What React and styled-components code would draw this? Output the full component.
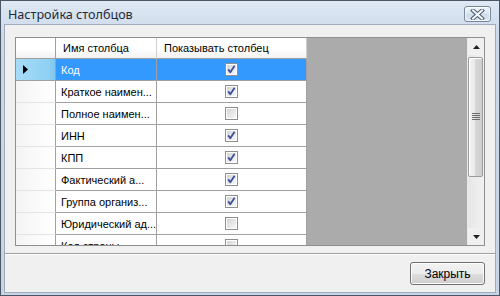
import React from "react";
import styled, { createGlobalStyle } from "styled-components";

const GlobalStyle = createGlobalStyle`
  html, body { margin: 0; padding: 0; }
  body { width: 500px; height: 296px; overflow: hidden; background: #fff; }
  * { box-sizing: border-box; }
`;

const Window = styled.div`
  width: 500px;
  height: 296px;
  border: 1px solid #4a5666;
  background: linear-gradient(#dfe8f4, #c9d7e9 40px, #c6d4e6);
  display: flex;
  flex-direction: column;
  font-family: "Liberation Sans", Arial, sans-serif;
`;

const TitleBar = styled.div`
  height: 23px;
  flex: none;
  display: flex;
  justify-content: space-between;
  align-items: flex-start;
  padding: 0 8px 0 7px;
`;

const Title = styled.div`
  margin-top: 6px;
  font-family: "Noto Sans", "Open Sans", sans-serif;
  font-size: 12.6px;
  line-height: 16px;
  color: #1e2a3a;
`;

const CloseButton = styled.div`
  margin-top: 5px;
  width: 27px;
  height: 16px;
  border: 1px solid #75869c;
  border-radius: 3px;
  background: linear-gradient(#f1f5fa, #dbe4ef 50%, #cfdbe8 51%, #dde6f1);
  box-shadow: inset 0 0 0 1px rgba(255, 255, 255, 0.7);
  display: flex;
  align-items: center;
  justify-content: center;
`;

const Client = styled.div`
  flex: 1;
  margin: 0 3px 2px 3px;
  border: 1px solid #9eabbc;
  background: #f0f0f0;
  display: flex;
  flex-direction: column;
`;

const Main = styled.div`
  padding: 12px 10px 7px 10px;
`;

const GridFrame = styled.div`
  height: 209px;
  border: 1px solid #8f8f8f;
  display: flex;
  overflow: hidden;
  background: #ababab;
`;

const Table = styled.div`
  display: grid;
  grid-template-columns: 40px 101px 150px;
  grid-template-rows: 21px;
  grid-auto-rows: 22px;
  align-content: start;
  background: #ababab;
`;

const HeaderCell = styled.div`
  border-right: 1px solid ${(p) => (p.$corner ? "#a0a0a0" : "#cfcfcf")};
  border-bottom: 1px solid #a0a0a0;
  background: linear-gradient(#ffffff, #ffffff 55%, #f2f2f2);
  font-size: 11px;
  color: #000;
  display: flex;
  align-items: center;
  padding-left: 7px;
  white-space: nowrap;
  overflow: hidden;
`;

const RowHead = styled.div`
  border-right: 1px solid #a0a0a0;
  border-bottom: 1px solid ${(p) => (p.$selected ? "#a0a0a0" : "#e4e4e4")};
  background: ${(p) =>
    p.$selected
      ? "linear-gradient(to right, #a6dcf7, #8fd0f3 85%, #7fc6ee)"
      : "linear-gradient(to right, #f4f4f4, #fbfbfb 60%, #ffffff)"};
  display: flex;
  align-items: center;
  padding-left: 7px;
`;

const Cell = styled.div`
  border-right: 1px solid #a0a0a0;
  border-bottom: 1px solid #a0a0a0;
  background: ${(p) => (p.$selected ? "#3399ff" : "#ffffff")};
  color: ${(p) => (p.$selected ? "#ffffff" : "#000000")};
  font-size: 11px;
  display: flex;
  align-items: center;
  justify-content: ${(p) => (p.$center ? "center" : "flex-start")};
  padding-left: ${(p) => (p.$center ? "0" : "5px")};
  white-space: nowrap;
  overflow: hidden;
`;

const Fill = styled.div`
  flex: 1;
  background: #ababab;
`;

const ScrollBar = styled.div`
  width: 17px;
  flex: none;
  background: linear-gradient(to right, #e6e6e6, #f2f2f2);
  border-left: 1px solid #e9e9e9;
  display: flex;
  flex-direction: column;
`;

const ArrowButton = styled.div`
  height: 17px;
  flex: none;
  display: flex;
  align-items: center;
  justify-content: center;
  background: #f0f0f0;
`;

const Track = styled.div`
  flex: 1;
  padding: 2px 0 0 0;
`;

const Thumb = styled.div`
  height: 120px;
  margin: 0 1px 0 0;
  border: 1px solid #9b9b9b;
  border-radius: 2px;
  background: linear-gradient(to right, #f4f4f4, #e9e9e9 45%, #d6d6d6 50%, #cfcfcf 100%);
  box-shadow: inset 1px 1px 0 #ffffff;
  display: flex;
  align-items: center;
  justify-content: center;
`;

const Footer = styled.div`
  flex: 1;
  border-top: 1px solid #a0a0a0;
  box-shadow: inset 0 1px 0 #ffffff;
  padding: 8px 10px 7px 10px;
  display: flex;
  justify-content: flex-end;
  align-items: flex-start;
`;

const Button = styled.div`
  width: 75px;
  height: 23px;
  border: 1px solid #707070;
  border-radius: 3px;
  background: linear-gradient(#f2f2f2, #ebebeb 50%, #dddddd 51%, #cfcfcf);
  box-shadow: inset 0 0 0 1px #fcfcfc;
  font-size: 12px;
  color: #000;
  display: flex;
  align-items: center;
  justify-content: center;
`;

const Check = ({ checked }) => (
  <svg width="13" height="13" viewBox="0 0 13 13">
    <defs>
      <linearGradient id="cbg" x1="0" y1="0" x2="1" y2="1">
        <stop offset="0" stopColor="#d4d4d4" />
        <stop offset="1" stopColor="#f8f8f8" />
      </linearGradient>
    </defs>
    <rect x="0.5" y="0.5" width="12" height="12" fill="#ffffff" stroke="#8e8f8f" />
    <rect x="2" y="2" width="9" height="9" fill="url(#cbg)" />
    {checked && (
      <path d="M3.2 6.4 L5.3 9.2 L9.6 2.8" fill="none" stroke="#3b4f9c" strokeWidth="1.8" strokeLinejoin="round" />
    )}
  </svg>
);

const rows = [
  { name: "Код", checked: true },
  { name: "Краткое наимен...", checked: true },
  { name: "Полное наимен...", checked: false },
  { name: "ИНН", checked: true },
  { name: "КПП", checked: true },
  { name: "Фактический а...", checked: true },
  { name: "Группа организ...", checked: true },
  { name: "Юридический ад...", checked: false },
  { name: "Код страны", checked: false },
];

export default function App() {
  return (
    <>
      <GlobalStyle />
      <Window>
        <TitleBar>
          <Title>Настройка столбцов</Title>
          <CloseButton>
            <svg width="15" height="11" viewBox="0 0 15 11">
              <path d="M3 1.5 L12 9.5 M12 1.5 L3 9.5" stroke="#4d5d73" strokeWidth="4" strokeLinecap="square" />
              <path d="M3 1.5 L12 9.5 M12 1.5 L3 9.5" stroke="#f4f7fb" strokeWidth="2" strokeLinecap="square" />
            </svg>
          </CloseButton>
        </TitleBar>
        <Client>
          <Main>
            <GridFrame>
              <Table>
                <HeaderCell $corner />
                <HeaderCell>Имя столбца</HeaderCell>
                <HeaderCell>Показывать столбец</HeaderCell>
                {rows.map((r, i) => (
                  <React.Fragment key={i}>
                    <RowHead $selected={i === 0}>
                      {i === 0 && (
                        <svg width="5" height="9" viewBox="0 0 5 9">
                          <path d="M0 0 L5 4.5 L0 9 Z" fill="#000" />
                        </svg>
                      )}
                    </RowHead>
                    <Cell $selected={i === 0}>{r.name}</Cell>
                    <Cell $selected={i === 0} $center>
                      <Check checked={r.checked} />
                    </Cell>
                  </React.Fragment>
                ))}
              </Table>
              <Fill />
              <ScrollBar>
                <ArrowButton>
                  <svg width="7" height="4" viewBox="0 0 7 4">
                    <path d="M0 4 L3.5 0 L7 4 Z" fill="#222" />
                  </svg>
                </ArrowButton>
                <Track>
                  <Thumb>
                    <svg width="8" height="8" viewBox="0 0 8 8">
                      <path d="M0 0.5 H8 M0 2.5 H8 M0 4.5 H8 M0 6.5 H8" stroke="#6f6f6f" strokeWidth="1" />
                    </svg>
                  </Thumb>
                </Track>
                <ArrowButton>
                  <svg width="7" height="4" viewBox="0 0 7 4">
                    <path d="M0 0 L3.5 4 L7 0 Z" fill="#222" />
                  </svg>
                </ArrowButton>
              </ScrollBar>
            </GridFrame>
          </Main>
          <Footer>
            <Button>Закрыть</Button>
          </Footer>
        </Client>
      </Window>
    </>
  );
}
